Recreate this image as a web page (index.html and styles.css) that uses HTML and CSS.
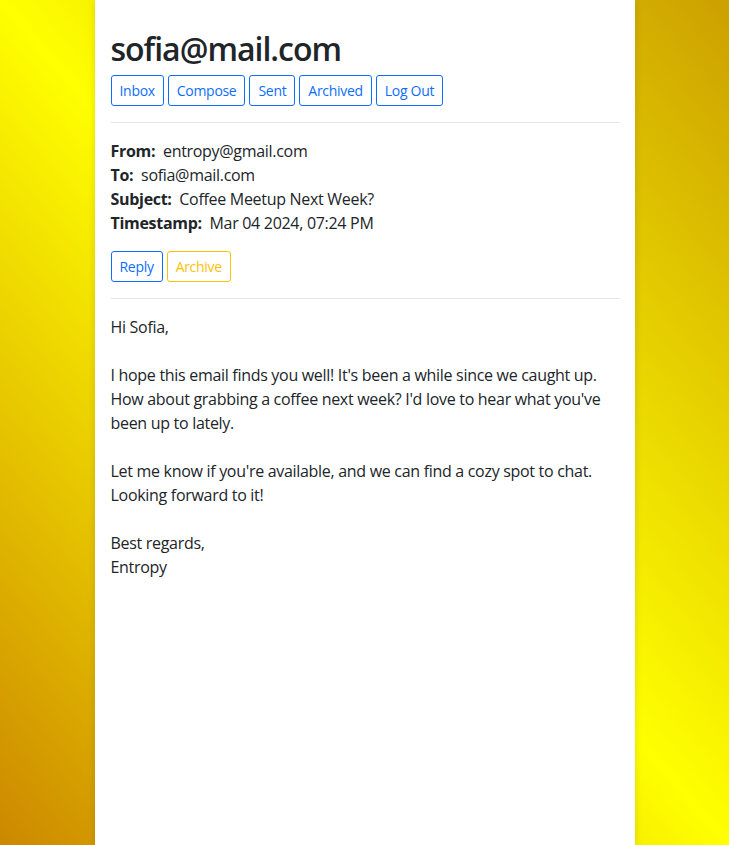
FILE: index.html
```html
<!DOCTYPE html>
<html lang="en">
<head>
<meta charset="utf-8">
<title>Email</title>
<link rel="stylesheet" href="styles.css">
</head>
<body>
<div class="page">
  <h1 class="title">sofia@mail.com</h1>
  <nav class="btn-row">
    <button class="btn btn-primary">Inbox</button>
    <button class="btn btn-primary">Compose</button>
    <button class="btn btn-primary">Sent</button>
    <button class="btn btn-primary">Archived</button>
    <button class="btn btn-primary">Log Out</button>
  </nav>
  <hr class="rule">
  <div class="meta">
    <div><strong>From:</strong>&nbsp; entropy@gmail.com</div>
    <div><strong>To:</strong>&nbsp; sofia@mail.com</div>
    <div><strong>Subject:</strong>&nbsp; Coffee Meetup Next Week?</div>
    <div><strong>Timestamp:</strong>&nbsp; Mar 04 2024, 07:24 PM</div>
  </div>
  <div class="btn-row actions">
    <button class="btn btn-primary">Reply</button>
    <button class="btn btn-warning">Archive</button>
  </div>
  <hr class="rule">
  <div class="body">
    <p>Hi Sofia,</p>
    <p>I hope this email finds you well! It's been a while since we caught up. How about grabbing a coffee next week? I'd love to hear what you've been up to lately.</p>
    <p>Let me know if you're available, and we can find a cozy spot to chat. Looking forward to it!</p>
    <p>Best regards,<br>Entropy</p>
  </div>
</div>
</body>
</html>
```
FILE: styles.css
```css
html, body {
  margin: 0;
  padding: 0;
}
body {
  min-height: 100vh;
  font-family: "Open Sans", "Noto Sans", sans-serif;
  font-size: 16px;
  line-height: 1.5;
  letter-spacing: -0.3px;
  color: #212529;
  background: linear-gradient(to bottom left, #cca000 0%, #ffff00 50%, #cc8800 100%);
}
.page {
  box-sizing: border-box;
  max-width: 540px;
  min-height: 100vh;
  margin: 0 auto;
  padding: 30px 16px 16px;
  background: #fff;
  box-shadow: 0 0 8px rgba(0, 0, 0, 0.12);
}
.title {
  margin: 0 0 7px;
  font-size: 32px;
  font-weight: 600;
  line-height: 1.2;
  letter-spacing: -1px;
}
.btn-row {
  display: flex;
  gap: 4px;
}
.btn {
  font-family: inherit;
  font-size: 14px;
  line-height: 21px;
  letter-spacing: -0.3px;
  padding: 4px 8px;
  background: #fff;
  border: 1px solid;
  border-radius: 3px;
}
.btn-primary {
  color: #0d6efd;
  border-color: #0d6efd;
}
.btn-warning {
  color: #ffc107;
  border-color: #ffc107;
}
.rule {
  margin: 16px 0;
  border: 0;
  border-top: 1px solid #e3e4e5;
}
.meta {
  margin-bottom: 16px;
}
.meta strong {
  font-weight: 700;
}
.body p {
  margin: 0 0 24px;
}
```
